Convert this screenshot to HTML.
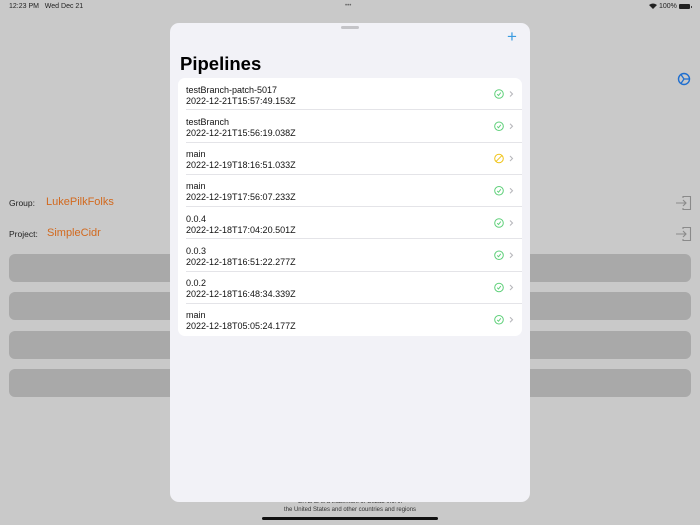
<!DOCTYPE html>
<html><head><meta charset="utf-8"><style>
*{margin:0;padding:0;box-sizing:border-box}
body{width:700px;height:525px;overflow:hidden;background:#c9c9c9;font-family:"Liberation Sans",sans-serif;position:relative}
.abs{position:absolute}
.btn{position:absolute;left:9px;width:682px;height:28px;background:#a9a9a9;border-radius:6px}
.sheet{position:absolute;left:170px;top:23px;width:360px;height:479px;background:#f2f2f7;border-radius:9px}
.card{position:absolute;left:8px;top:55px;width:344px;height:258px;background:#fff;border-radius:7px;overflow:hidden}
.row{position:absolute;left:0;width:344px;height:32.25px}
.row .t{position:absolute;left:8px;top:6.5px;font-size:9px;line-height:11px;color:#111}
.row .sep{position:absolute;left:8px;right:0;bottom:0;height:1px;background:#e4e4e8}
</style></head><body>
<div class="abs" style="left:9px;top:2.5px;font-size:7px;color:#222">12:23 PM&nbsp;&nbsp; Wed Dec 21</div>
<div class="abs" style="left:345px;top:3px;font-size:6px;color:#666">•••</div>
<div class="abs" style="left:649px;top:2.5px;font-size:7px;color:#222">
<svg width="8" height="6" viewBox="0 0 8 6" style="vertical-align:-1px"><path d="M0 2 Q4 -1 8 2 L4 6Z" fill="#222"/></svg> 100%</div>
<div class="abs" style="left:679px;top:4px;width:11px;height:5px;background:#222;border-radius:1px"></div>
<div class="abs" style="left:691px;top:5.5px;width:1px;height:2px;background:#444"></div>
<svg class="abs" style="left:677px;top:72px" width="14" height="14" viewBox="0 0 14 14"><circle cx="7" cy="7" r="5.5" fill="none" stroke="#1f6fd0" stroke-width="1.4"/><path d="M7 7 L12.3 7 M7 7 L4 2.6 M7 7 L4 11.4" stroke="#1f6fd0" stroke-width="1.3"/></svg>
<div class="abs" style="left:9px;top:198px;font-size:8.5px;color:#222">Group:</div>
<div class="abs" style="left:46px;top:196px;font-size:11px;color:#d2691e">LukePilkFolks</div>
<div class="abs" style="left:9px;top:229px;font-size:8.5px;color:#222">Project:</div>
<div class="abs" style="left:47px;top:227px;font-size:11px;color:#d2691e">SimpleCidr</div>
<svg class="abs" style="left:675px;top:194px" width="18" height="18" viewBox="0 0 18 18"><path d="M8 4 V2.5 H15.5 V15.5 H8 V14" fill="none" stroke="#8a8a8a" stroke-width="1.1"/><path d="M1 9 H11 M8 6 L11 9 L8 12" fill="none" stroke="#8a8a8a" stroke-width="1.1"/></svg>
<svg class="abs" style="left:675px;top:225px" width="18" height="18" viewBox="0 0 18 18"><path d="M8 4 V2.5 H15.5 V15.5 H8 V14" fill="none" stroke="#8a8a8a" stroke-width="1.1"/><path d="M1 9 H11 M8 6 L11 9 L8 12" fill="none" stroke="#8a8a8a" stroke-width="1.1"/></svg>
<div class="btn" style="top:254px"></div>
<div class="btn" style="top:292px"></div>
<div class="btn" style="top:331px"></div>
<div class="btn" style="top:369px"></div>
<div class="abs" style="left:0;top:498px;width:700px;text-align:center;font-size:6px;line-height:8px;color:#333">GITLAB is a trademark of GitLab Inc. in<br>the United States and other countries and regions</div>
<div class="abs" style="left:262px;top:517px;width:176px;height:3px;background:#111;border-radius:2px"></div>
<div class="sheet">
<div class="abs" style="left:171px;top:3px;width:18px;height:2.5px;background:#c4c4c8;border-radius:2px"></div>
<div class="abs" style="left:337px;top:4px;font-size:17px;color:#3a9be0;font-weight:300">+</div>
<div class="abs" style="left:10px;top:30px;font-size:18.5px;font-weight:bold;color:#000">Pipelines</div>
<div class="card">
<div class="row" style="top:0"><div class="t">testBranch-patch-5017<br>2022-12-21T15:57:49.153Z</div><div class="sep"></div></div>
<div class="row" style="top:32.25px"><div class="t">testBranch<br>2022-12-21T15:56:19.038Z</div><div class="sep"></div></div>
<div class="row" style="top:64.5px"><div class="t">main<br>2022-12-19T18:16:51.033Z</div><div class="sep"></div></div>
<div class="row" style="top:96.75px"><div class="t">main<br>2022-12-19T17:56:07.233Z</div><div class="sep"></div></div>
<div class="row" style="top:129px"><div class="t">0.0.4<br>2022-12-18T17:04:20.501Z</div><div class="sep"></div></div>
<div class="row" style="top:161.25px"><div class="t">0.0.3<br>2022-12-18T16:51:22.277Z</div><div class="sep"></div></div>
<div class="row" style="top:193.5px"><div class="t">0.0.2<br>2022-12-18T16:48:34.339Z</div><div class="sep"></div></div>
<div class="row" style="top:225.75px"><div class="t">main<br>2022-12-18T05:05:24.177Z</div></div>
</div>
<svg class="abs" style="left:324px;top:66px" width="22" height="260" viewBox="0 0 22 260">
<g fill="none" stroke-width="1">
<g stroke="#5fd07a"><circle cx="5" cy="5" r="4.3"/><path d="M3.2 5.2 L4.5 6.5 L6.8 3.6"/></g>
<g stroke="#5fd07a" transform="translate(0,32.25)"><circle cx="5" cy="5" r="4.3"/><path d="M3.2 5.2 L4.5 6.5 L6.8 3.6"/></g>
<g stroke="#f0c419" transform="translate(0,64.5)"><circle cx="5" cy="5" r="4.3"/><path d="M2.2 7.8 L7.8 2.2"/></g>
<g stroke="#5fd07a" transform="translate(0,96.75)"><circle cx="5" cy="5" r="4.3"/><path d="M3.2 5.2 L4.5 6.5 L6.8 3.6"/></g>
<g stroke="#5fd07a" transform="translate(0,129)"><circle cx="5" cy="5" r="4.3"/><path d="M3.2 5.2 L4.5 6.5 L6.8 3.6"/></g>
<g stroke="#5fd07a" transform="translate(0,161.25)"><circle cx="5" cy="5" r="4.3"/><path d="M3.2 5.2 L4.5 6.5 L6.8 3.6"/></g>
<g stroke="#5fd07a" transform="translate(0,193.5)"><circle cx="5" cy="5" r="4.3"/><path d="M3.2 5.2 L4.5 6.5 L6.8 3.6"/></g>
<g stroke="#5fd07a" transform="translate(0,225.75)"><circle cx="5" cy="5" r="4.3"/><path d="M3.2 5.2 L4.5 6.5 L6.8 3.6"/></g>
<g stroke="#b8b8bc" stroke-width="1.1">
<path d="M16 2.5 L18.5 5 L16 7.5"/>
<path d="M16 34.75 L18.5 37.25 L16 39.75"/>
<path d="M16 67 L18.5 69.5 L16 72"/>
<path d="M16 99.25 L18.5 101.75 L16 104.25"/>
<path d="M16 131.5 L18.5 134 L16 136.5"/>
<path d="M16 163.75 L18.5 166.25 L16 168.75"/>
<path d="M16 196 L18.5 198.5 L16 201"/>
<path d="M16 228.25 L18.5 230.75 L16 233.25"/>
</g></g></svg>
</div>
</body></html>
